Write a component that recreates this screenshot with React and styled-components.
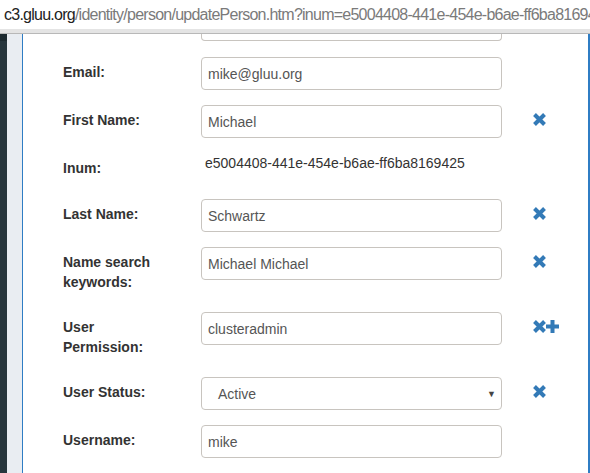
import React from 'react';
import styled, { createGlobalStyle } from 'styled-components';

const GlobalStyle = createGlobalStyle`
    html, body {
        margin: 0;
        padding: 0;
        overflow: hidden;
        background: #ffffff;
    }
    #root {
        width: 590px;
        height: 473px;
    }
`;

// Icons
const RemoveIcon = () => (
    <svg width="13" height="13" viewBox="0 0 13 13">
        <path d="M1.5 1.5 L11.5 11.5 M11.5 1.5 L1.5 11.5" stroke="#337ab7" strokeWidth="4" />
    </svg>
);

const PlusIcon = () => (
    <svg width="13" height="13" viewBox="0 0 13 13">
        <path d="M6.5 0 V13 M0 6.5 H13" stroke="#337ab7" strokeWidth="4" />
    </svg>
);

const fields = [
    { label: 'Email:', value: 'mike@gluu.org' },
    { label: 'First Name:', value: 'Michael', remove: true },
    { label: 'Inum:', value: 'e5004408-441e-454e-b6ae-ff6ba8169425', text: true },
    { label: 'Last Name:', value: 'Schwartz', remove: true },
    { label: 'Name search keywords:', value: 'Michael Michael', remove: true },
    { label: 'User Permission:', value: 'clusteradmin', remove: true, add: true },
    { label: 'User Status:', value: 'Active', remove: true, select: true },
    { label: 'Username:', value: 'mike' },
];

class App extends React.Component {
    render() {
        return (
            <Wrapper>
                <GlobalStyle />
                <UrlBar>
                    <UrlText>
                        <Host>c3.gluu.org</Host>/identity/person/updatePerson.htm?inum=e5004408-441e-454e-b6ae-ff6ba81694
                    </UrlText>
                </UrlBar>
                <Body>
                    <DarkStrip />
                    <GreyStrip />
                    <Modal>
                        <PartialInput />
                        {fields.map((f) => (
                            <Row key={f.label} $text={f.text}>
                                <Label>{f.label}</Label>
                                {f.text ? (
                                    <Value>{f.value}</Value>
                                ) : f.select ? (
                                    <Select>
                                        <span>{f.value}</span>
                                        <Caret>▼</Caret>
                                    </Select>
                                ) : (
                                    <Input>{f.value}</Input>
                                )}
                                <Actions>
                                    {f.remove && <RemoveIcon />}
                                    {f.add && <PlusIcon />}
                                </Actions>
                            </Row>
                        ))}
                    </Modal>
                </Body>
            </Wrapper>
        );
    }
}

const Wrapper = styled.div`
    width: 590px;
    height: 473px;
    display: flex;
    flex-direction: column;
    overflow: hidden;
    font-family: "Liberation Sans", Arial, sans-serif;
`;

const UrlBar = styled.div`
    height: 29px;
    background: #ffffff;
    border-bottom: 4px solid #e4e4e4;
    box-shadow: 0 1px 0 #b8b8b8;
    position: relative;
    z-index: 1;
    display: flex;
    align-items: center;
    padding-left: 4px;
    flex-shrink: 0;
    overflow: hidden;
`;

const UrlText = styled.div`
    font-size: 16px;
    letter-spacing: -0.75px;
    color: #7a7a7a;
    white-space: nowrap;
    padding-top: 1px;
`;

const Host = styled.span`
    color: #222222;
`;

const Body = styled.div`
    flex: 1;
    display: flex;
    margin-top: 1px;
    min-height: 0;
`;

const DarkStrip = styled.div`
    width: 7px;
    background: linear-gradient(#1d2a30 0, #1d2a30 7px, #27363d 7px);
`;

const GreyStrip = styled.div`
    width: 15px;
    background: #e9edf2;
`;

const Modal = styled.div`
    flex: 1;
    background: #ffffff;
    border-left: 1px solid #2f7dc4;
    border-right: 2px solid #2f7dc4;
    padding-left: 40px;
    overflow: hidden;
`;

const PartialInput = styled.div`
    width: 299px;
    height: 6px;
    margin-left: 138px;
    margin-bottom: 16px;
    border: 1px solid #c8c4bf;
    border-top: none;
    border-radius: 0 0 4px 4px;
`;

const Row = styled.div`
    display: grid;
    grid-template-columns: 138px 301px 1fr;
    align-items: start;
    margin-bottom: 15px;
    min-height: ${(p) => (p.$text ? '31px' : '0')};
`;

const Label = styled.div`
    width: 105px;
    padding: 5px 0;
    font-size: 14px;
    font-weight: bold;
    line-height: 20px;
    color: #333333;
`;

const Input = styled.div`
    box-sizing: border-box;
    height: 33px;
    padding: 0 6px;
    display: flex;
    align-items: center;
    border: 1px solid #c8c4bf;
    border-radius: 4px;
    font-size: 14px;
    color: #555555;
`;

const Select = styled(Input)`
    padding: 0 5px 0 16px;
    justify-content: space-between;
`;

const Caret = styled.span`
    font-size: 9px;
    color: #444444;
`;

const Value = styled.div`
    padding-left: 4px;
    font-size: 14px;
    line-height: 20px;
    color: #333333;
`;

const Actions = styled.div`
    display: flex;
    align-items: center;
    height: 28px;
    padding-left: 31px;
`;

export default App;
